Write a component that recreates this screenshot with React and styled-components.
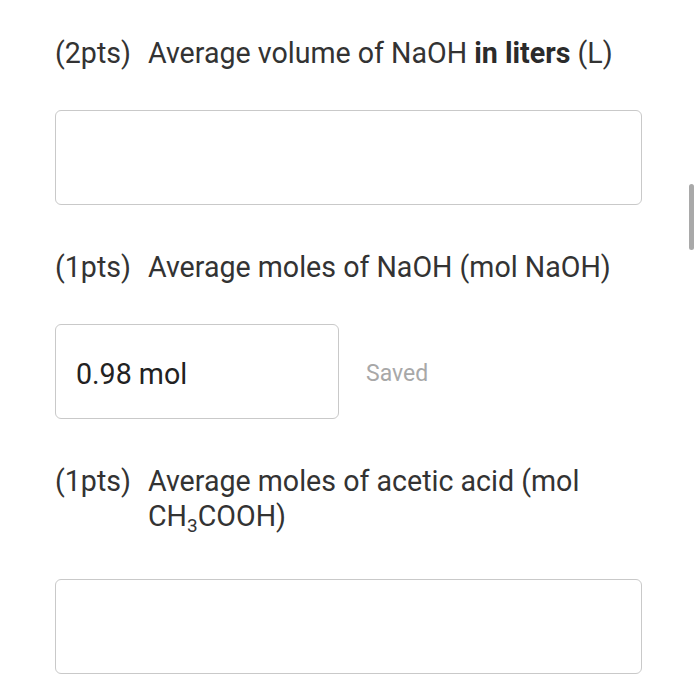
import React from 'react';
import styled, { createGlobalStyle } from 'styled-components';

const GlobalStyle = createGlobalStyle`
  html, body {
    margin: 0;
    padding: 0;
    background: #ffffff;
  }
  body {
    font-family: Roboto, "Liberation Sans", sans-serif;
    color: #333333;
  }
`;

const Page = styled.div`
  position: relative;
  width: 700px;
  height: 699px;
  overflow: hidden;
  box-sizing: border-box;
  padding: 36px 59px 0 55px;
  display: flex;
  flex-direction: column;
  gap: 45px;
`;

const Question = styled.div`
  display: flex;
  flex-direction: column;
  gap: ${({ $gap }) => $gap || 39}px;
`;

const Label = styled.div`
  display: flex;
  font-size: 28.6px;
  line-height: 35px;
  color: #333333;
`;

const Points = styled.span`
  flex: 0 0 93px;
`;

const Text = styled.span`
  flex: 1;
  b {
    font-weight: 700;
    color: #2b2b2b;
  }
  sub {
    font-size: 19px;
    position: relative;
    top: 6px;
    vertical-align: baseline;
    line-height: 0;
  }
`;

const AnswerRow = styled.div`
  display: flex;
  align-items: center;
  gap: 27px;
`;

const Input = styled.div`
  box-sizing: border-box;
  width: ${({ $width }) => $width || '587px'};
  height: 95px;
  border: 1.5px solid #c9c9c9;
  border-radius: 6px;
  display: flex;
  align-items: center;
  padding: 4px 20px 0;
  font-size: 28.6px;
  color: #222222;
`;

const Status = styled.span`
  padding-top: 4px;
  font-size: 23px;
  color: #a8a8a8;
`;

const Scrollbar = styled.div`
  position: absolute;
  right: 6px;
  top: 184px;
  width: 5px;
  height: 66px;
  border-radius: 3px;
  background: #a9a9a9;
`;

export default function App() {
  return (
    <>
      <GlobalStyle />
      <Page>
        <Question>
          <Label>
            <Points>(2pts)</Points>
            <Text>
              Average volume of NaOH <b>in liters</b> (L)
            </Text>
          </Label>
          <Input />
        </Question>

        <Question>
          <Label>
            <Points>(1pts)</Points>
            <Text>Average moles of NaOH (mol NaOH)</Text>
          </Label>
          <AnswerRow>
            <Input $width="284px">0.98 mol</Input>
            <Status>Saved</Status>
          </AnswerRow>
        </Question>

        <Question $gap={45}>
          <Label>
            <Points>(1pts)</Points>
            <Text>
              Average moles of acetic acid (mol CH<sub>3</sub>COOH)
            </Text>
          </Label>
          <Input />
        </Question>

        <Scrollbar />
      </Page>
    </>
  );
}
